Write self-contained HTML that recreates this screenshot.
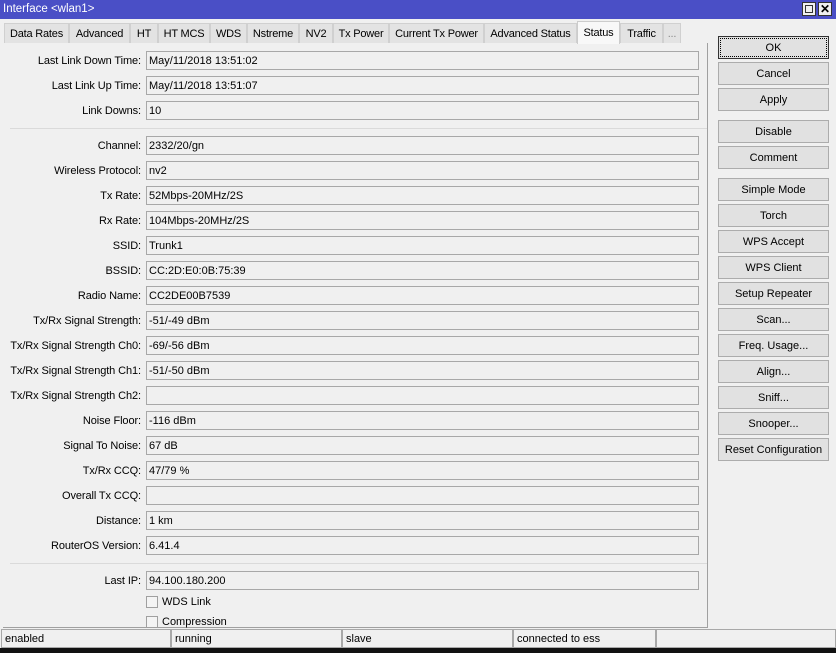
<!DOCTYPE html>
<html><head><meta charset="utf-8"><style>
*{box-sizing:border-box;margin:0;padding:0}
body{width:836px;height:653px;background:#f0f0f0;font-family:"Liberation Sans",sans-serif;font-size:11px;color:#000;position:relative;overflow:hidden;white-space:nowrap}
.abs{position:absolute}
#title{left:0;top:0;width:836px;height:19px;background:#4a4fc6;color:#fff;font-size:11.5px;line-height:19px;padding-left:3px}
.wb{top:2px;width:14px;height:14px;background:#f0f0f0;border:1px solid #333}
.tab{top:23px;height:20px;background:#e3e3e3;border:1px solid #d0d0d0;border-bottom:none;line-height:20px;text-align:center;font-size:11px;letter-spacing:-0.2px;overflow:hidden}
.tab.act{top:21px;height:23px;background:#f8f8f8;border-color:#ccc;line-height:22px}
#panel{left:3px;top:43px;width:705px;height:585px;border-right:1px solid #a0a0a0;border-bottom:1px solid #a0a0a0}
.lbl{left:-60px;width:201px;text-align:right;font-size:11px;height:18px;line-height:20px;letter-spacing:-0.1px}
.fld{left:146px;width:553px;height:19px;border:1px solid #a8a8a8;background:#f0f0f0;line-height:18px;padding-left:2px;font-size:11px}
.sep{left:10px;width:697px;height:1px;background:#dadada}
.btn{left:718px;width:111px;height:23px;border:1px solid #acacac;background:#e1e1e1;text-align:center;line-height:22px;font-size:11px}
.cb{left:146px;width:12px;height:12px;border:1px solid #a0a0a0;background:#f4f4f4}
.st{top:629px;height:19px;border:1px solid #a8a8a8;background:#f0f0f0;line-height:18px;padding-left:3px;font-size:11px}
</style></head><body>
<div id="title" class="abs">Interface &lt;wlan1&gt;</div>
<div class="abs wb" style="left:802px"><div class="abs" style="left:2px;top:2px;width:8px;height:8px;border:1px solid #333"></div></div>
<div class="abs wb" style="left:818px;font-size:12px;line-height:12px;text-align:center;font-weight:bold">✕</div>

<div class="abs tab" style="left:4px;width:65px">Data Rates</div>
<div class="abs tab" style="left:69px;width:61px">Advanced</div>
<div class="abs tab" style="left:130px;width:28px">HT</div>
<div class="abs tab" style="left:158px;width:52px">HT MCS</div>
<div class="abs tab" style="left:210px;width:37px">WDS</div>
<div class="abs tab" style="left:247px;width:52px">Nstreme</div>
<div class="abs tab" style="left:299px;width:34px">NV2</div>
<div class="abs tab" style="left:333px;width:56px">Tx Power</div>
<div class="abs tab" style="left:389px;width:95px">Current Tx Power</div>
<div class="abs tab" style="left:484px;width:93px">Advanced Status</div>
<div class="abs tab act" style="left:577px;width:43px">Status</div>
<div class="abs tab" style="left:620px;width:43px">Traffic</div>
<div class="abs tab" style="left:663px;width:18px;color:#888">...</div>

<div id="panel" class="abs"></div>

<div class="abs lbl" style="top:51px">Last Link Down Time:</div><div class="abs fld" style="top:51px">May/11/2018 13:51:02</div>
<div class="abs lbl" style="top:76px">Last Link Up Time:</div><div class="abs fld" style="top:76px">May/11/2018 13:51:07</div>
<div class="abs lbl" style="top:101px">Link Downs:</div><div class="abs fld" style="top:101px">10</div>
<div class="abs sep" style="top:128px"></div>
<div class="abs lbl" style="top:136px">Channel:</div><div class="abs fld" style="top:136px">2332/20/gn</div>
<div class="abs lbl" style="top:161px">Wireless Protocol:</div><div class="abs fld" style="top:161px">nv2</div>
<div class="abs lbl" style="top:186px">Tx Rate:</div><div class="abs fld" style="top:186px">52Mbps-20MHz/2S</div>
<div class="abs lbl" style="top:211px">Rx Rate:</div><div class="abs fld" style="top:211px">104Mbps-20MHz/2S</div>
<div class="abs lbl" style="top:236px">SSID:</div><div class="abs fld" style="top:236px">Trunk1</div>
<div class="abs lbl" style="top:261px">BSSID:</div><div class="abs fld" style="top:261px">CC:2D:E0:0B:75:39</div>
<div class="abs lbl" style="top:286px">Radio Name:</div><div class="abs fld" style="top:286px">CC2DE00B7539</div>
<div class="abs lbl" style="top:311px">Tx/Rx Signal Strength:</div><div class="abs fld" style="top:311px">-51/-49 dBm</div>
<div class="abs lbl" style="top:336px">Tx/Rx Signal Strength Ch0:</div><div class="abs fld" style="top:336px">-69/-56 dBm</div>
<div class="abs lbl" style="top:361px">Tx/Rx Signal Strength Ch1:</div><div class="abs fld" style="top:361px">-51/-50 dBm</div>
<div class="abs lbl" style="top:386px">Tx/Rx Signal Strength Ch2:</div><div class="abs fld" style="top:386px"></div>
<div class="abs lbl" style="top:411px">Noise Floor:</div><div class="abs fld" style="top:411px">-116 dBm</div>
<div class="abs lbl" style="top:436px">Signal To Noise:</div><div class="abs fld" style="top:436px">67 dB</div>
<div class="abs lbl" style="top:461px">Tx/Rx CCQ:</div><div class="abs fld" style="top:461px">47/79 %</div>
<div class="abs lbl" style="top:486px">Overall Tx CCQ:</div><div class="abs fld" style="top:486px"></div>
<div class="abs lbl" style="top:511px">Distance:</div><div class="abs fld" style="top:511px">1 km</div>
<div class="abs lbl" style="top:536px">RouterOS Version:</div><div class="abs fld" style="top:536px">6.41.4</div>
<div class="abs sep" style="top:563px"></div>
<div class="abs lbl" style="top:571px">Last IP:</div><div class="abs fld" style="top:571px">94.100.180.200</div>
<div class="abs cb" style="top:596px"></div><div class="abs" style="left:162px;top:596px;font-size:11px">WDS Link</div>
<div class="abs cb" style="top:616px"></div><div class="abs" style="left:162px;top:616px;font-size:11px">Compression</div>

<div class="abs btn" style="top:36px;border:1px solid #333;outline:1px dotted #000;outline-offset:-3px">OK</div>
<div class="abs btn" style="top:62px">Cancel</div>
<div class="abs btn" style="top:88px">Apply</div>
<div class="abs btn" style="top:120px">Disable</div>
<div class="abs btn" style="top:146px">Comment</div>
<div class="abs btn" style="top:178px">Simple Mode</div>
<div class="abs btn" style="top:204px">Torch</div>
<div class="abs btn" style="top:230px">WPS Accept</div>
<div class="abs btn" style="top:256px">WPS Client</div>
<div class="abs btn" style="top:282px">Setup Repeater</div>
<div class="abs btn" style="top:308px">Scan...</div>
<div class="abs btn" style="top:334px">Freq. Usage...</div>
<div class="abs btn" style="top:360px">Align...</div>
<div class="abs btn" style="top:386px">Sniff...</div>
<div class="abs btn" style="top:412px">Snooper...</div>
<div class="abs btn" style="top:438px">Reset Configuration</div>

<div class="abs st" style="left:1px;width:170px">enabled</div>
<div class="abs st" style="left:171px;width:171px">running</div>
<div class="abs st" style="left:342px;width:171px">slave</div>
<div class="abs st" style="left:513px;width:143px">connected to ess</div>
<div class="abs st" style="left:656px;width:180px"></div>
<div class="abs" style="left:0;top:648px;width:836px;height:5px;background:#111"></div>
</body></html>
